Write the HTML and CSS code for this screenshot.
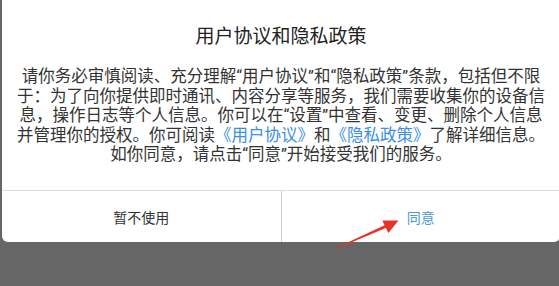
FILE: index.html
```html
<!DOCTYPE html>
<html lang="zh-CN">
<head>
<meta charset="utf-8">
<link rel="stylesheet" href="styles.css">
</head>
<body>
<div class="screen">
  <div class="dialog">
    <h1 class="title">用户协议和隐私政策</h1>
    <p class="body">请你务必审慎阅读、充分理解“用户协议”和“隐私政策”条款，包括但不限<br>于：为了向你提供即时通讯、内容分享等服务，我们需要收集你的设备信<br>息，操作日志等个人信息。你可以在“设置”中查看、变更、删除个人信息<br>并管理你的授权。你可阅读<span class="link">《用户协议》</span>和<span class="link">《隐私政策》</span>了解详细信息。<br>如你同意，请点击“同意”开始接受我们的服务。</p>
    <div class="actions">
      <div class="btn">暂不使用</div>
      <div class="btn primary">同意</div>
    </div>
  </div>
  <svg class="arrow" width="559" height="286" viewBox="0 0 559 286">
    <polygon points="337,248.6 385.8,228.1 388.4,233 398.5,220.6 382.3,220.5 384.6,225.3 336.8,247.6" fill="#e6332a"/>
  </svg>
</div>
</body>
</html>
```
FILE: styles.css
```css
html, body {
  margin: 0;
  padding: 0;
}
body {
  width: 559px;
  height: 286px;
  overflow: hidden;
  background: #666666;
  font-family: Roboto, "Noto Sans CJK SC", sans-serif;
}
.screen {
  position: relative;
  width: 559px;
  height: 286px;
  overflow: hidden;
}
.dialog {
  margin-left: 2px;
  width: 558px;
  height: 242px;
  background: #ffffff;
  border-radius: 0 0 6px 6px;
  display: flex;
  flex-direction: column;
}
.title {
  margin: 25px 0 0;
  font-size: 19px;
  line-height: 24px;
  font-weight: normal;
  color: #222222;
  text-align: center;
}
.body {
  margin: 18px 0 0;
  font-size: 16.5px;
  line-height: 19.5px;
  color: #333333;
  text-align: center;
  white-space: nowrap;
}
.link {
  color: #3a8ee6;
}
.actions {
  margin-top: auto;
  height: 51px;
  border-top: 1px solid #dcdcdc;
  display: flex;
}
.btn {
  flex: 1;
  display: flex;
  align-items: center;
  justify-content: center;
  font-size: 14px;
  color: #333333;
}
.btn.primary {
  color: #4a9ad8;
  border-left: 1px solid #d0d0d0;
}
.arrow {
  position: absolute;
  left: 0;
  top: 0;
}
```
